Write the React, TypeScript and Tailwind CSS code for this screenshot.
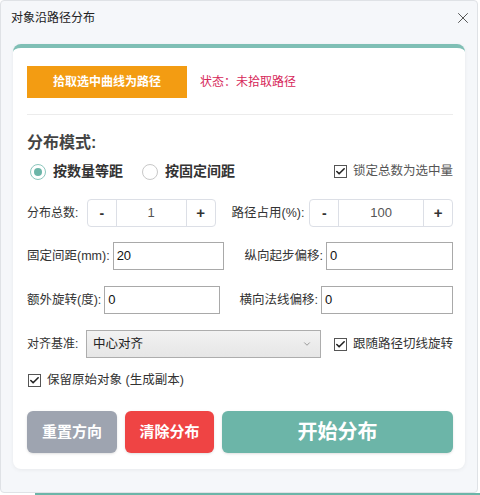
import { X, ChevronDown, Check } from "lucide-react";

const font = { fontFamily: '"Liberation Sans", "Noto Sans CJK SC", sans-serif' };

function Stepper({ value, width }: { value: string; width: string }) {
  return (
    <div className={`flex h-[28px] ${width} rounded-[4px] border border-[#dcdfe6] bg-white text-[#333]`}>
      <button className="w-[29px] border-r border-[#dcdfe6] text-[14px] font-bold">-</button>
      <div className="flex flex-1 items-center justify-center text-[13px] text-[#555]">{value}</div>
      <button className="w-[29px] border-l border-[#dcdfe6] text-[15px] font-bold">+</button>
    </div>
  );
}

function Box({ checked = true }: { checked?: boolean }) {
  return (
    <span className="flex h-[13px] w-[13px] items-center justify-center border border-[#555] bg-white">
      {checked && <Check size={11} strokeWidth={3.5} className="text-[#222]" />}
    </span>
  );
}

function Field({ label, value, inputW }: { label: string; value: string; inputW: string }) {
  return (
    <div className="flex items-center">
      <span className="mr-[3px] text-[12.5px] text-[#333]">{label}</span>
      <div className={`flex h-[28px] ${inputW} items-center border border-[#a9a9a9] bg-white px-[3px] text-[13px] text-[#111]`}>
        {value}
      </div>
    </div>
  );
}

export default function App() {
  return (
    <div style={font} className="h-[495px] w-[480px] bg-white">
      <div className="relative h-[493px] w-[478px] rounded-[4px] border border-[#dfe2e6] bg-[#f5f7fa]">
        <div className="flex h-[34px] items-center justify-between pl-[10px] pr-[5px]">
          <span className="text-[12px] text-[#222]">对象沿路径分布</span>
          <X size={18} strokeWidth={1.2} className="text-[#444]" />
        </div>

        <div className="mx-[12px] mt-[9px] rounded-[8px] border-t-[4px] border-[#7fbfb5] bg-white pb-[16px] pl-[14px] pr-[12px] pt-[18px] shadow-[0_1px_4px_rgba(0,0,0,0.06)]">
          <div className="flex items-center border-b border-[#ececec] pb-[16px]">
            <button className="h-[32px] w-[160px] bg-[#f39c12] text-[12px] font-bold text-white">拾取选中曲线为路径</button>
            <span className="ml-[13px] text-[12px] text-[#d6285a]">状态：未拾取路径</span>
          </div>

          <div className="mt-[16px] text-[16px] font-bold text-[#444]">分布模式:</div>

          <div className="mt-[6px] flex items-center">
            <span className="ml-[3px] flex h-[16px] w-[16px] items-center justify-center rounded-full border border-[#8cc7bd]">
              <span className="h-[8px] w-[8px] rounded-full bg-[#6cb5a8]" />
            </span>
            <span className="ml-[7px] text-[14px] font-bold text-[#333]">按数量等距</span>
            <span className="ml-[19px] h-[16px] w-[16px] rounded-full border border-[#c8c8c8]" />
            <span className="ml-[7px] text-[14px] font-bold text-[#333]">按固定间距</span>
            <span className="ml-auto flex items-center">
              <Box />
              <span className="ml-[6px] text-[12.5px] text-[#555]">锁定总数为选中量</span>
            </span>
          </div>

          <div className="mt-[17px] flex items-center">
            <span className="w-[60px] text-[12px] text-[#333]">分布总数:</span>
            <Stepper value="1" width="w-[129px]" />
            <span className="ml-[16px] w-[78px] text-[12.5px] text-[#333]">路径占用(%):</span>
            <Stepper value="100" width="w-[144px]" />
          </div>

          <div className="mt-[15px] flex items-center justify-between">
            <Field label="固定间距(mm):" value="20" inputW="w-[111px]" />
            <Field label="纵向起步偏移:" value="0" inputW="w-[127px]" />
          </div>

          <div className="mt-[16px] flex items-center justify-between">
            <Field label="额外旋转(度):" value="0" inputW="w-[116px]" />
            <Field label="横向法线偏移:" value="0" inputW="w-[132px]" />
          </div>

          <div className="mt-[16px] flex items-center">
            <span className="w-[59px] text-[12px] text-[#333]">对齐基准:</span>
            <div className="flex h-[28px] w-[235px] items-center justify-between border border-[#adadad] bg-gradient-to-b from-[#f2f2f2] to-[#e6e6e6] pl-[6px] pr-[8px] text-[12.5px] text-[#222]">
              <span>中心对齐</span>
              <ChevronDown size={10} className="text-[#888]" />
            </div>
            <span className="ml-auto flex items-center">
              <Box />
              <span className="ml-[6px] text-[12.5px] text-[#333]">跟随路径切线旋转</span>
            </span>
          </div>

          <div className="mt-[13px] flex items-center pl-[1px]">
            <Box />
            <span className="ml-[6px] text-[12.5px] text-[#333]">保留原始对象 (生成副本)</span>
          </div>

          <div className="mt-[21px] flex gap-[8px]">
            <button className="h-[42px] w-[90px] rounded-[6px] bg-[#9ea4b0] text-[15px] font-bold text-white shadow-sm">重置方向</button>
            <button className="h-[42px] w-[89px] rounded-[6px] bg-[#ef4444] text-[15px] font-bold text-white shadow-sm">清除分布</button>
            <button className="h-[42px] flex-1 rounded-[6px] bg-[#6cb5a8] text-[20px] font-bold text-white shadow-sm">开始分布</button>
          </div>
        </div>
      </div>
      <div className="ml-[35px] h-[2px] bg-[#6cb5a8]" />
    </div>
  );
}
